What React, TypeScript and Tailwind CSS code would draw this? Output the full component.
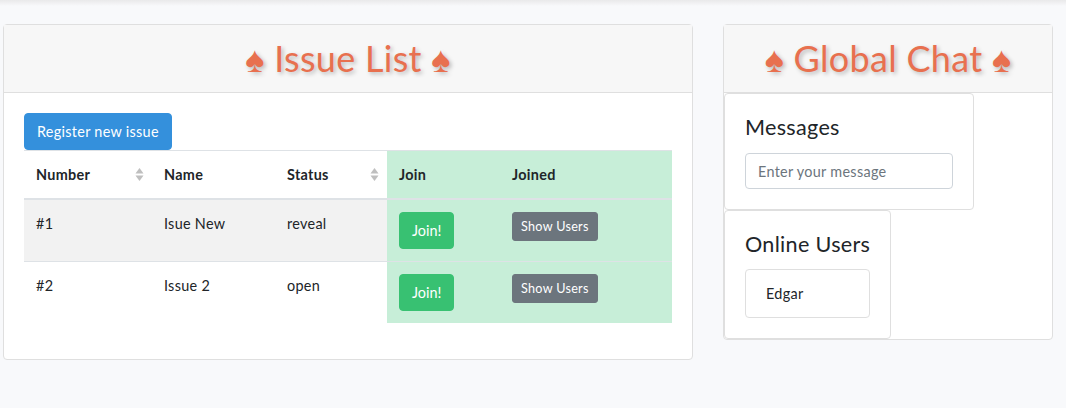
import React from 'react';

const FONT = "font-['Lato','Open_Sans',sans-serif] tracking-[0.3px]";

type Issue = { id: number; name: string; status: string };

const ISSUES: Issue[] = [
  { id: 1, name: 'Isue New', status: 'reveal' },
  { id: 2, name: 'Issue 2', status: 'open' },
];

function SortIcon() {
  return (
    <svg
      width="9"
      height="15"
      viewBox="0 0 9 15"
      className="absolute right-[8px] top-1/2 -translate-y-1/2"
    >
      <path d="M4.5 0.5 L8.5 6 L0.5 6 Z" fill="#bfbfbf" />
      <path d="M0.5 8 L8.5 8 L4.5 13.5 Z" fill="#bfbfbf" />
    </svg>
  );
}

function CardTitle({ children }: { children: React.ReactNode }) {
  return (
    <div className="border-b border-[#dfdfdf] bg-[#f7f7f7] px-5 py-3 text-center">
      <h1 className="text-[36px] leading-[43px] font-normal text-[#e8704f] [text-shadow:2px_2px_4px_rgba(0,0,0,0.25)]">
        {children}
      </h1>
    </div>
  );
}

function IssueList() {
  return (
    <section className="w-[690px] rounded-[4px] border border-[#dfdfdf] bg-white">
      <CardTitle>♠ Issue List ♠</CardTitle>
      <div className="p-5 pb-[36px]">
        <button className="rounded-[4px] border border-[#3490dc] bg-[#3490dc] px-3 py-[6px] text-[14.4px] leading-[23px] text-white">
          Register new issue
        </button>
        <table className="w-full table-fixed border-collapse text-left text-[14.4px] text-[#212529]">
          <colgroup>
            <col className="w-[128px]" />
            <col className="w-[123px]" />
            <col className="w-[112px]" />
            <col className="w-[113px]" />
            <col />
          </colgroup>
          <thead>
            <tr className="border-t border-b-2 border-[#dee2e6]">
              <th className="relative px-3 py-3 leading-[23px] font-bold">
                Number
                <SortIcon />
              </th>
              <th className="px-3 py-3 leading-[23px] font-bold">Name</th>
              <th className="relative px-3 py-3 leading-[23px] font-bold">
                Status
                <SortIcon />
              </th>
              <th className="bg-[#c7eed8] px-3 py-3 leading-[23px] font-bold">Join</th>
              <th className="bg-[#c7eed8] px-3 py-3 leading-[23px] font-bold">Joined</th>
            </tr>
          </thead>
          <tbody>
            {ISSUES.map((issue, i) => (
              <tr
                key={issue.id}
                className={`border-t border-[#dee2e6] ${i % 2 === 0 ? 'bg-[#f2f2f2]' : 'bg-white'}`}
              >
                <td className="px-3 py-3 align-top leading-[23px]">#{issue.id}</td>
                <td className="px-3 py-3 align-top leading-[23px]">{issue.name}</td>
                <td className="px-3 py-3 align-top leading-[23px]">{issue.status}</td>
                <td className="bg-[#c7eed8] px-3 py-3 align-top">
                  <button className="rounded-[4px] border border-[#38c172] bg-[#38c172] px-3 py-[6px] text-[14.4px] leading-[23px] tracking-normal text-white">
                    Join!
                  </button>
                </td>
                <td className="bg-[#c7eed8] px-3 py-3 align-top">
                  <button className="rounded-[3px] border border-[#6c757d] bg-[#6c757d] px-2 py-1 text-[12.6px] leading-[19px] text-white">
                    Show Users
                  </button>
                </td>
              </tr>
            ))}
          </tbody>
        </table>
      </div>
    </section>
  );
}

function GlobalChat() {
  return (
    <section className="w-[330px] self-start rounded-[4px] border border-[#dfdfdf] bg-white">
      <CardTitle>♠ Global Chat ♠</CardTitle>
      <div className="flex flex-col items-start">
        <div className="w-fit rounded-[4px] border border-[#dfdfdf] bg-white p-5">
          <h4 className="text-[21.6px] leading-[26px] font-normal text-[#212529]">Messages</h4>
          <input
            type="text"
            placeholder="Enter your message"
            className="mt-[13px] block h-[36px] w-[208px] rounded-[4px] border border-[#ced4da] px-3 text-[14.4px] text-[#495057] placeholder:text-[#6c757d]"
          />
        </div>
        <div className="w-fit rounded-[4px] border border-[#dfdfdf] bg-white p-5">
          <h4 className="text-[21.6px] leading-[26px] font-normal text-[#212529]">Online Users</h4>
          <ul className="mt-3">
            <li className="rounded-[4px] border border-[#dfdfdf] px-5 py-3 text-[14.4px] leading-[23px] text-[#212529]">
              Edgar
            </li>
          </ul>
        </div>
      </div>
    </section>
  );
}

export default function App() {
  return (
    <div className={`min-h-[408px] bg-[#f8f9fb] ${FONT}`}>
      <div className="h-[6px] bg-gradient-to-b from-[#e9e9ea] to-[#f8f9fb]" />
      <main className="flex items-start gap-[30px] pt-[18px] pl-[3px]">
        <IssueList />
        <GlobalChat />
      </main>
    </div>
  );
}
